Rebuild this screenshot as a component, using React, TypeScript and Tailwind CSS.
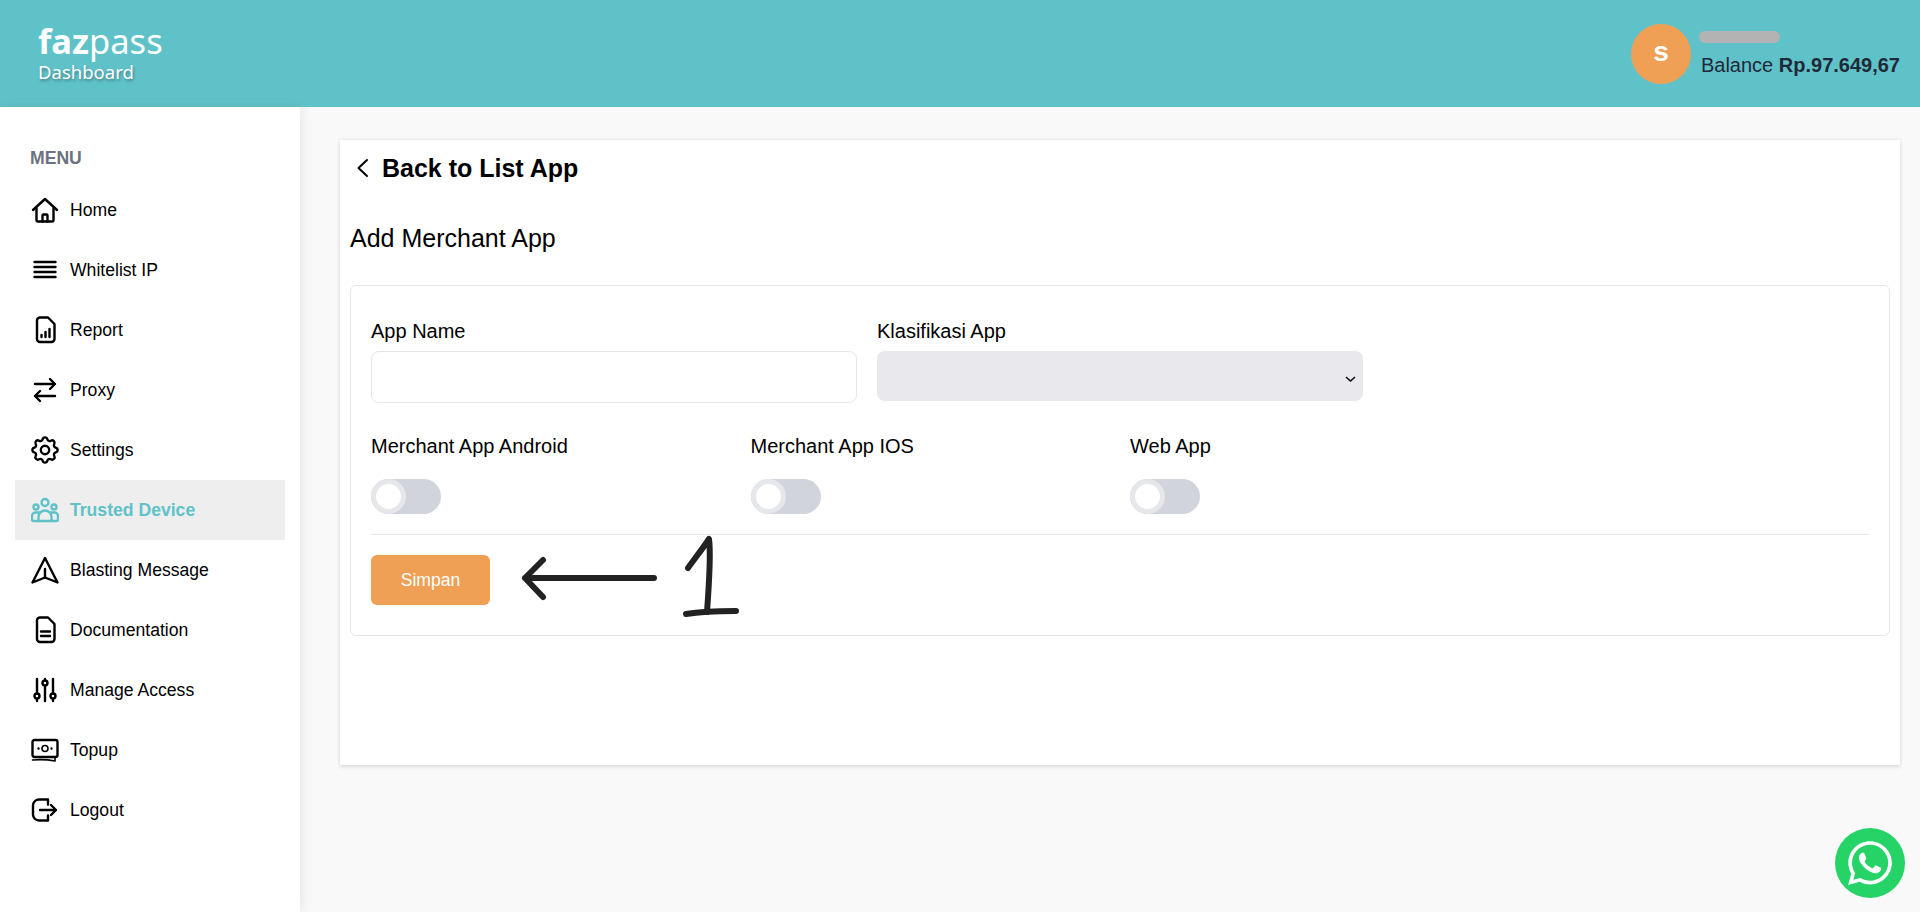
import React from "react";
import { FaWhatsapp } from "react-icons/fa";

const paths: Record<string, React.ReactNode> = {
  home: (
    <>
      <path d="M2 14L14 3l12 11" />
      <path d="M5.500 12v12a1.500 1.500 0 001.500 1.500h14a1.500 1.500 0 001.500-1.500V12" />
      <path d="M11.500 25.500v-6a1 1 0 011-1h3a1 1 0 011 1v6" />
    </>
  ),
  list: <path d="M3.500 6h21M3.500 11h21M3.500 16h21M3.500 21h21" />,
  report: (
    <>
      <path d="M9 1.500h8l6.500 6.500v15a3 3 0 01-3 3H9a3 3 0 01-3-3v-18.500a3 3 0 013-3z" />
      <path d="M10.500 21v-2M14.500 21v-5M18.500 21v-8" />
    </>
  ),
  proxy: <path d="M4 8h20M19 3l5 5-5 5M24 20H4M9 15l-5 5 5 5" />,
  settings: (
    <g transform="translate(-2.800 -2.800) scale(1.4)" strokeWidth="1.700">
      <path d="M10.325 4.317c.426 -1.756 2.924 -1.756 3.35 0a1.724 1.724 0 0 0 2.573 1.066c1.543 -.94 3.31 .826 2.37 2.37a1.724 1.724 0 0 0 1.065 2.572c1.756 .426 1.756 2.924 0 3.35a1.724 1.724 0 0 0 -1.066 2.573c.94 1.543 -.826 3.31 -2.37 2.37a1.724 1.724 0 0 0 -2.572 1.065c-.426 1.756 -2.924 1.756 -3.35 0a1.724 1.724 0 0 0 -2.573 -1.066c-1.543 .94 -3.31 -.826 -2.37 -2.37a1.724 1.724 0 0 0 -1.065 -2.572c-1.756 -.426 -1.756 -2.924 0 -3.35a1.724 1.724 0 0 0 1.066 -2.573c-.94 -1.543 .826 -3.31 2.37 -2.37c1 .608 2.296 .07 2.572 -1.065z" />
      <circle cx="12" cy="12" r="3" />
    </g>
  ),
  users: (
    <>
      <circle cx="14" cy="6.500" r="3.500" />
      <circle cx="5" cy="11" r="2.500" />
      <circle cx="23" cy="11" r="2.500" />
      <path d="M7.500 25v-4a6.500 6.500 0 0113 0v4z" />
      <path d="M7.500 25H2.500a1.500 1.500 0 01-1.500-1.500V20a3.500 3.500 0 013.500-3.500h4M20.500 25h5a1.500 1.500 0 001.500-1.500V20a3.500 3.500 0 00-3.500-3.500h-4" />
    </>
  ),
  blast: (
    <>
      <path d="M14 2L26.500 26.500 14 21.500 1.500 26.500z" />
      <path d="M14 21.500V13" />
    </>
  ),
  doc: (
    <>
      <path d="M9 1.500h8l6.500 6.500v15a3 3 0 01-3 3H9a3 3 0 01-3-3v-18.500a3 3 0 013-3z" />
      <path d="M10 15.500h9M10 20h9" />
    </>
  ),
  sliders: (
    <>
      <path d="M6 3v14.500M6 23v2M14 3v1.500M14 10v15M22 3v14.500M22 23v2" />
      <circle cx="6" cy="20" r="2.500" />
      <circle cx="14" cy="7" r="2.500" />
      <circle cx="22" cy="20" r="2.500" />
    </>
  ),
  money: (
    <>
      <rect x="1.500" y="4" width="25" height="17" rx="2" />
      <circle cx="14" cy="12.500" r="3" strokeWidth="1.600" />
      <path d="M7.500 12.500h.01M20.500 12.500h.01" />
      <path d="M1.500 24c8-.8 15-.5 22.500 1v-3" strokeWidth="1.600" />
    </>
  ),
  logout: (
    <>
      <path d="M17 8.500V3.500H8a6 6 0 00-6 6v9a6 6 0 006 6h9v-5" />
      <path d="M9 14h16M20 9l5 5-5 5" />
    </>
  ),
};

function NavIcon({ name, color = "#000000" }: { name: string; color?: string }) {
  return (
    <svg
      viewBox="0 0 28 28"
      className="w-7 h-7 shrink-0"
      fill="none"
      stroke={color}
      strokeWidth="2.400"
      strokeLinecap="round"
      strokeLinejoin="round"
    >
      {paths[name]}
    </svg>
  );
}

const items = [
  ["home", "Home"],
  ["list", "Whitelist IP"],
  ["report", "Report"],
  ["proxy", "Proxy"],
  ["settings", "Settings"],
  ["users", "Trusted Device"],
  ["blast", "Blasting Message"],
  ["doc", "Documentation"],
  ["sliders", "Manage Access"],
  ["money", "Topup"],
  ["logout", "Logout"],
];

function Toggle({ label }: { label: string }) {
  return (
    <div>
      <div className="text-[20px] leading-[20px] text-black">{label}</div>
      <div className="mt-[23px] w-[70px] h-[35px] rounded-full bg-[#d1d5db]">
        <div className="w-[35px] h-[35px] rounded-full bg-white border-[5px] border-[#e5e7eb]" />
      </div>
    </div>
  );
}

export default function App() {
  return (
    <div className="h-screen overflow-hidden flex flex-col bg-[#f9f9f9] font-['Liberation_Sans',Arial,sans-serif]">
      <header className="h-[107px] shrink-0 bg-[#60c2c9] flex items-center justify-between pl-[38px] pr-[20px]">
        <div className="text-white font-['Noto_Sans','Open_Sans',sans-serif] pb-[2px]">
          <div className="text-[34.500px] leading-[36px]">
            <span className="font-bold">faz</span>
            <span>pass</span>
          </div>
          <div className="mt-[2px] text-[18.500px] leading-[22px] [text-shadow:1px_2px_3px_rgba(0,0,0,0.35)]">Dashboard</div>
        </div>
        <div className="flex items-center gap-[10px]">
          <div className="w-[60px] h-[60px] rounded-full bg-[#f0a055] flex items-center justify-center text-white font-bold text-[28px] leading-none pb-1">
            s
          </div>
          <div className="text-[#1f2937] text-[20px] leading-[22px]">
            <div className="w-[81px] h-3 rounded-full bg-[#b3b3b3] -ml-[2px] mb-[11px]" />
            <div>
              Balance <span className="font-bold">Rp.97.649,67</span>
            </div>
          </div>
        </div>
      </header>

      <div className="flex-1 flex min-h-0">
        <aside className="w-[300px] shrink-0 bg-white shadow-[2px_0_10px_rgba(0,0,0,0.08)] pt-[41px] px-[15px] z-10">
          <div className="pl-[15px] text-[17.600px] leading-[20px] font-bold text-[#6b7280] mb-[12px]">MENU</div>
          <nav>
            {items.map(([icon, label]) => {
              const active = label === "Trusted Device";
              return (
                <div
                  key={label}
                  className={
                    active
                      ? "h-[60px] flex items-center pl-4 gap-[11px] bg-[#eeeeee] text-[17.600px] font-bold text-[#60c2c9]"
                      : "h-[60px] flex items-center pl-4 gap-[11px] text-[17.600px] text-black"
                  }
                >
                  <NavIcon name={icon} color={active ? "#60c2c9" : "#000000"} />
                  <span>{label}</span>
                </div>
              );
            })}
          </nav>
        </aside>

        <main className="flex-1 pt-[33px] pl-10 pr-5 min-w-0">
          <div className="h-[625px] bg-white shadow-[0_1px_4px_rgba(0,0,0,0.18)] px-[10px] pt-[14px]">
            <div className="flex items-center h-7">
              <svg viewBox="0 0 14 20" className="w-[14px] h-5 ml-[6px]" fill="none" stroke="#000" strokeWidth="2" strokeLinecap="round" strokeLinejoin="round">
                <path d="M11 2L2.500 10l8.500 8" />
              </svg>
              <span className="ml-3 pt-px text-[25px] font-bold text-black">Back to List App</span>
            </div>
            <h2 className="mt-[42px] text-[25px] leading-7 text-black">Add Merchant App</h2>
            <div className="mt-[33px] border border-[#e5e7eb] rounded-md px-5 pt-[35px] pb-[30px]">
              <div className="grid grid-cols-3 gap-5">
                <div>
                  <div className="text-[20px] leading-[20px] text-black mb-[10px]">App Name</div>
                  <input className="block w-full h-[52px] border border-[#e5e7eb] rounded-lg bg-white" />
                </div>
                <div>
                  <div className="text-[20px] leading-[20px] text-black mb-[10px]">Klasifikasi App</div>
                  <div className="relative">
                    <select className="block w-full h-[50px] rounded-lg bg-[#e8e8ed] text-black appearance-none" />
                    <svg
                      viewBox="0 0 11 6"
                      className="absolute right-[7px] top-[25px] w-[11px] h-[6px] pointer-events-none"
                      fill="none"
                      stroke="#111111"
                      strokeWidth="1.600"
                    >
                      <path d="M1 1l4.500 4L10 1" />
                    </svg>
                  </div>
                </div>
              </div>
              <div className="grid grid-cols-4 gap-5 mt-[33px]">
                <Toggle label="Merchant App Android" />
                <Toggle label="Merchant App IOS" />
                <Toggle label="Web App" />
              </div>
              <div className="mt-5 border-t border-[#e5e7eb]" />
              <button className="mt-5 block w-[119px] h-[50px] rounded-md bg-[#f0a055] text-white text-[17.600px]">Simpan</button>
            </div>
          </div>
        </main>
      </div>

      <svg
        viewBox="0 0 240 100"
        className="fixed left-[510px] top-[530px] w-[240px] h-[100px]"
        fill="none"
        stroke="#222222"
        strokeWidth="6"
        strokeLinecap="round"
        strokeLinejoin="round"
      >
        <path d="M144 48H15M33 30L15 48l18 19" />
        <path d="M178 38c8-11 15-20 21-29 2 14 0 46-2 73" />
        <path d="M176 84c18-3 34-3 50-3" />
      </svg>

      <div className="fixed left-[1835px] top-[828px] w-[70px] h-[70px] rounded-full bg-[#25d366] flex items-center justify-center">
        <FaWhatsapp className="text-white w-[50px] h-[50px]" />
      </div>
    </div>
  );
}
